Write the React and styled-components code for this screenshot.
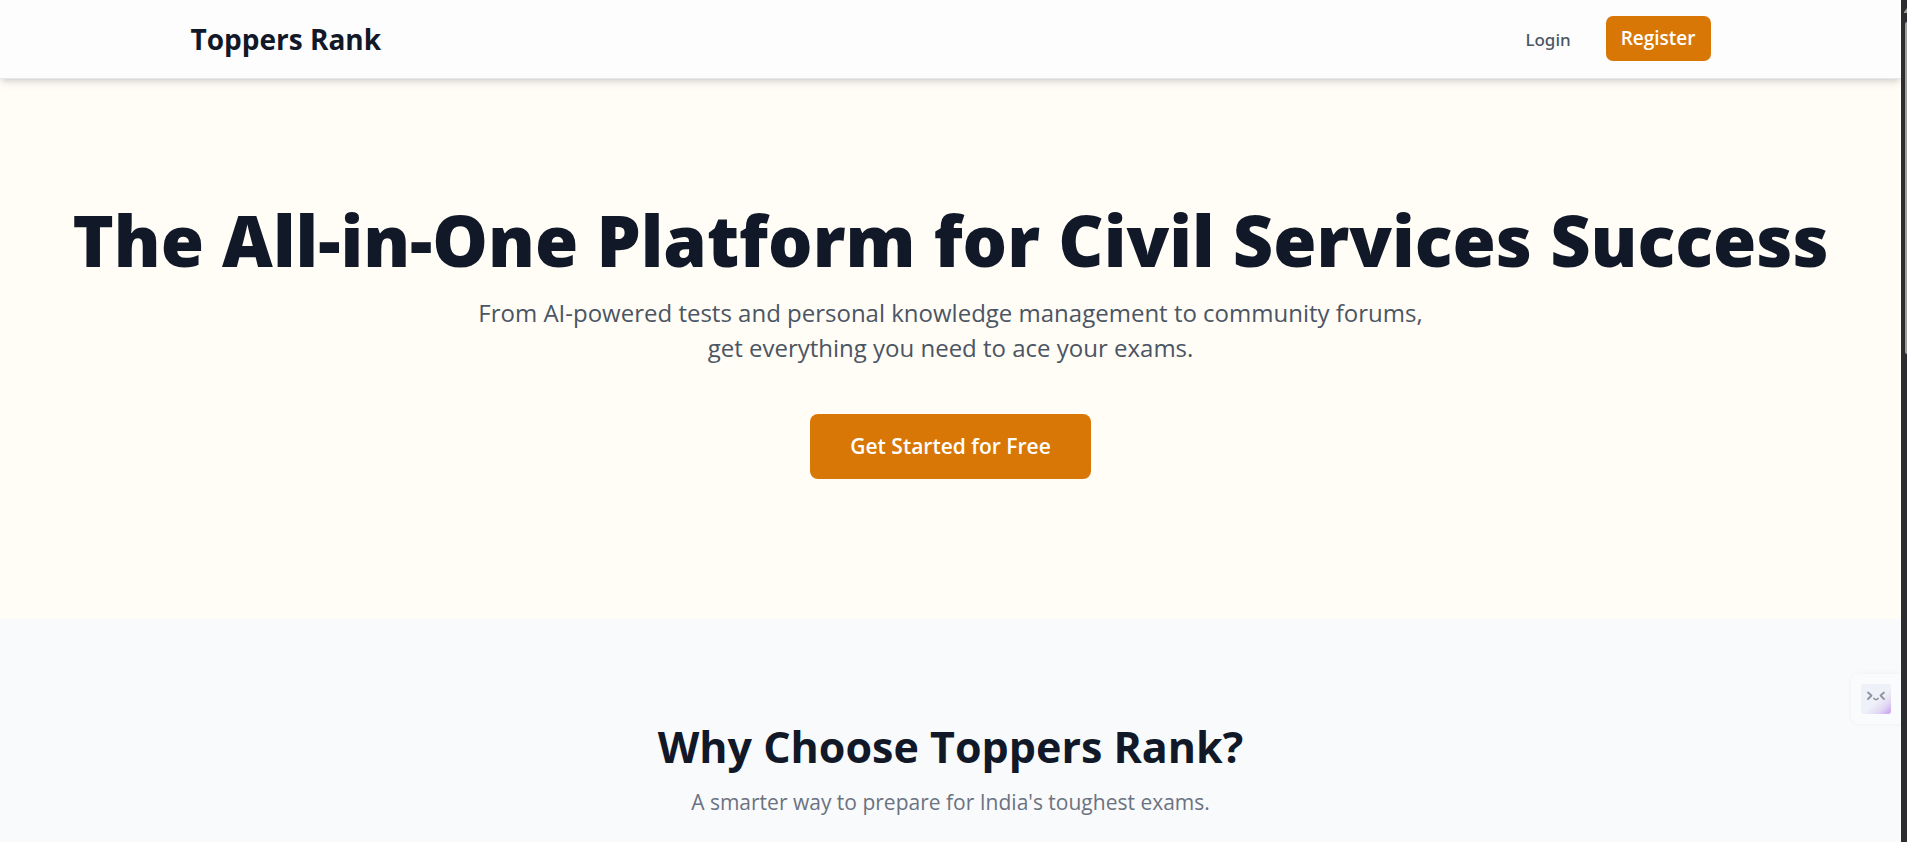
import React from 'react';
import styled, { createGlobalStyle } from 'styled-components';

const GlobalStyle = createGlobalStyle`
    * {
        box-sizing: border-box;
    }

    body {
        margin: 0;
        background: #f9fafb;
        color: #111827;
        font-family: "Open Sans", "Noto Sans", sans-serif;
    }

    h1, h2, p {
        margin: 0;
    }
`;

const Shell = styled.div`
    display: flex;
    height: 100vh;
    overflow: hidden;
`;

const Page = styled.div`
    flex: 1;
    min-width: 0;
    overflow: hidden;
`;

const Header = styled.header`
    position: relative;
    background: #fdfdfd;
    border-bottom: 1px solid #e5e7eb;
    box-shadow: 0 5px 8px -1px rgba(0, 0, 0, 0.1), 0 3px 5px -2px rgba(0, 0, 0, 0.1);
`;

const HeaderInner = styled.div`
    display: flex;
    align-items: center;
    justify-content: space-between;
    max-width: 1600px;
    margin: 0 auto;
    padding: 16px 40px 15px;
`;

const Logo = styled.a`
    color: #111827;
    font-size: 28px;
    font-weight: 700;
    line-height: 47px;
    text-decoration: none;
`;

const Nav = styled.nav`
    display: flex;
    align-items: flex-start;
    align-self: flex-start;
    gap: 35px;
`;

const LoginLink = styled.a`
    color: #4b5563;
    font-family: "Noto Sans", sans-serif;
    font-size: 17px;
    font-weight: 500;
    line-height: 47px;
    text-decoration: none;
`;

const Button = styled.button`
    border: 0;
    border-radius: ${({ $large }) => ($large ? '8px' : '7px')};
    background: #d97706;
    color: #fff;
    font-family: inherit;
    font-size: ${({ $large }) => ($large ? '21px' : '19px')};
    font-weight: 600;
    line-height: ${({ $large }) => ($large ? '35px' : '25px')};
    padding: ${({ $large }) => ($large ? '15px 40px' : '10px 15px')};
    cursor: pointer;
`;

const Hero = styled.section`
    display: flex;
    flex-direction: column;
    align-items: center;
    padding: 120px 40px 140px;
    background: #fffdf6;
    text-align: center;
`;

const HeroTitle = styled.h1`
    font-size: 70px;
    font-weight: 800;
    line-height: 82px;
    white-space: nowrap;
`;

const HeroText = styled.p`
    max-width: 960px;
    margin: 14px 0 49px;
    color: #4b5563;
    font-size: 24px;
    line-height: 35px;
`;

const Features = styled.section`
    padding: 100px 40px;
    background: #f9fafc;
    text-align: center;
`;

const SectionTitle = styled.h2`
    font-size: 43px;
    font-weight: 700;
    line-height: 56px;
`;

const SectionText = styled.p`
    margin-top: 10px;
    color: #6b7280;
    font-size: 21px;
    line-height: 35px;
`;

const Scrollbar = styled.div`
    display: flex;
    flex-direction: column;
    align-items: flex-end;
    gap: 9px;
    width: 6px;
    padding-top: 8px;
    background: #2c2d30;
`;

const ScrollArrow = styled.svg`
    display: block;
    width: 3px;
    height: 5px;
`;

const ScrollThumb = styled.div`
    width: 2px;
    height: 332px;
    border-radius: 2px 0 0 2px;
    background: #9f9f9f;
`;

// assistant tab that floats over the right edge of the page
const Assistant = styled.button`
    position: fixed;
    right: 6px;
    top: 674px;
    display: flex;
    align-items: center;
    width: 50px;
    height: 50px;
    padding: 0 10px;
    border: 0;
    border-radius: 8px 0 0 8px;
    background: #fafbfd;
    box-shadow: 0 0 5px rgba(17, 24, 39, 0.05);
    cursor: pointer;
`;

const Face = () => (
    <svg width="30" height="30" viewBox="0 0 30 30" fill="none" aria-hidden="true">
        <defs>
            <linearGradient id="face" x1="8" y1="6" x2="30" y2="30" gradientUnits="userSpaceOnUse">
                <stop offset="0.4" stopColor="#eef1f7" />
                <stop offset="0.7" stopColor="#e2d8f4" />
                <stop offset="1" stopColor="#c69df0" />
            </linearGradient>
        </defs>
        <rect width="30" height="30" rx="3" fill="url(#face)" />
        <g stroke="#8d92a0" strokeWidth="1.8" strokeLinecap="round" strokeLinejoin="round">
            <path d="M7 8.500L10.500 11.500L7 15" />
            <path d="M23 8.500L19.500 11.500L23 15" />
            <path d="M13 14.500Q15 16.800 17 14.500" />
        </g>
    </svg>
);

const App = () => {

    return (
        <>
            <GlobalStyle />
            <Shell>
                <Page>
                    <Header>
                        <HeaderInner>
                            <Logo href="#">Toppers Rank</Logo>
                            <Nav>
                                <LoginLink href="#login">Login</LoginLink>
                                <Button type="button">Register</Button>
                            </Nav>
                        </HeaderInner>
                    </Header>
                    <main>
                        <Hero>
                            <HeroTitle>The All-in-One Platform for Civil Services Success</HeroTitle>
                            <HeroText>
                                From AI-powered tests and personal knowledge management to community forums,
                                get everything you need to ace your exams.
                            </HeroText>
                            <Button type="button" $large>Get Started for Free</Button>
                        </Hero>
                        <Features>
                            <SectionTitle>Why Choose Toppers Rank?</SectionTitle>
                            <SectionText>A smarter way to prepare for India's toughest exams.</SectionText>
                        </Features>
                    </main>
                </Page>
                <Scrollbar>
                    <ScrollArrow viewBox="0 0 3 5" aria-hidden="true">
                        <path d="M3 0L0 4V5H3Z" fill="#9f9f9f" />
                    </ScrollArrow>
                    <ScrollThumb />
                </Scrollbar>
            </Shell>
            <Assistant type="button" aria-label="Open assistant">
                <Face />
            </Assistant>
        </>
    );

}

export default App;
